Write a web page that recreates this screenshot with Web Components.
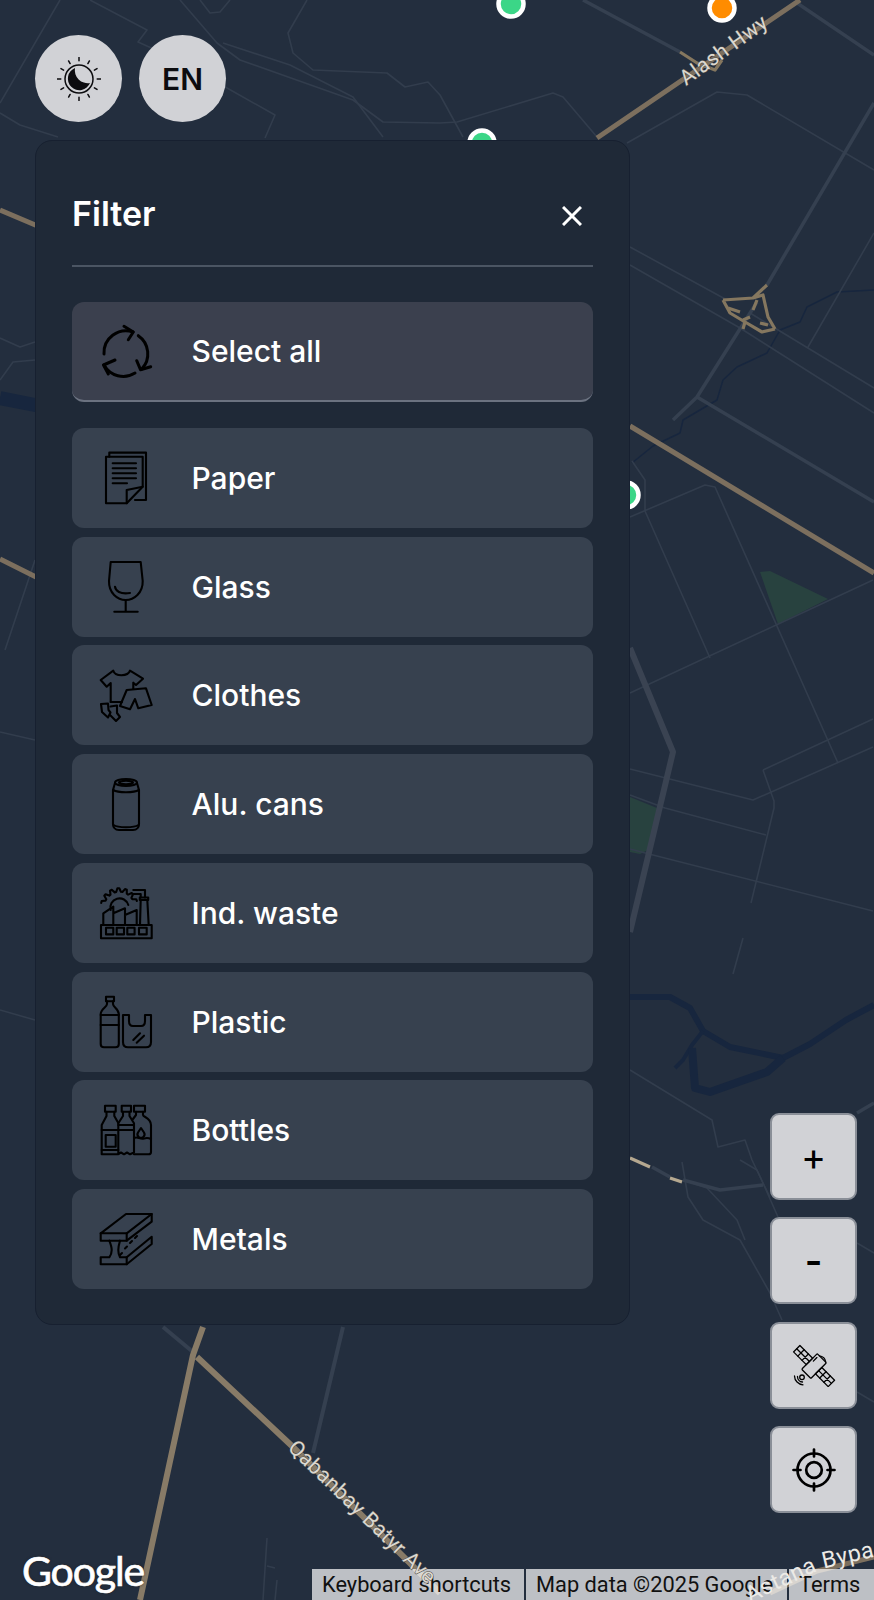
<!DOCTYPE html>
<html lang="en">
<head>
<meta charset="UTF-8">
<title>Filter map</title>
<style>
    html, body { margin: 0; background: #232e3e; }
    body { font-family: Inter, "Liberation Sans", sans-serif; }
</style>
</head>
<body>
<script>
    function gear() {
        const cx = 19.3, cy = 19.7;
        let pts = [];
        for (let i = 0; i < 26; i++) {
            const a = 192 + i * 6;
            const r = i % 4 < 2 ? 18.5 : 15;
            pts.push((cx + r * Math.cos(a * Math.PI / 180)).toFixed(1) + ' ' + (cy + r * Math.sin(a * Math.PI / 180)).toFixed(1));
        }
        return pts.join('L');
    }

    function sunRays() {
        let s = '';
        for (let i = 0; i < 12; i++) {
            const long = i % 3 === 0;
            const t = i * Math.PI / 6;
            const a = long ? 18.2 : 17.8, b = long ? 21.6 : 20.8;
            s += `M${(22 + a * Math.cos(t)).toFixed(2)} ${(22 + a * Math.sin(t)).toFixed(2)}L${(22 + b * Math.cos(t)).toFixed(2)} ${(22 + b * Math.sin(t)).toFixed(2)}`;
        }
        return s;
    }

    const ICONS = {
        all: `<g stroke-width="3"><path d="M4 29A22 22 0 0 1 33 7"/><path d="M24 1.3 33.3 7 28.3 14.7"/><path d="M38.3 10.7A22 22 0 0 1 41.7 44"/><path d="M36.7 35.7 40.5 44.7 50.7 41.7"/><path d="M35 48A22 22 0 0 1 4 40"/><path d="M15 35 3.5 40 8.3 49"/></g>`,
        paper: `<path d="M9.3 4.7V.6H46V48H35"/><path d="M42.7 34.7 26.7 51.3H6V4.7H42.7Z"/><path d="M26.7 51.3V38L42.7 34.7"/><path d="M12.7 11.3H36M12.7 16.3H36M12.7 21.3H36M12.7 26.3H36M12.7 31.3H27"/>`,
        glass: `<path d="M10.7 1H40.7L42.7 20C43 32 34 39 25.7 39S8.7 32 9 20Z"/><path d="M25.7 39V50.7M14.3 50.7H37.7"/><path d="M15 25.7C15.5 30 20 33.5 30 32"/>`,
        clothes: `<path d="M10.7 33V14L6.7 17.7.7 11 13.3 1.7C15 7.7 28 7.7 30 1.7L43 9.7 36 16 33.3 13.7V20"/><path d="M10.7 33H22"/><path d="M26.7 21 46 19.3 51.7 36 38.3 39.3 35 30 30 40.3 20 37Z"/><path d="M1 35 8 34.5 8.5 41 10.5 43.5 8 48.5 2 43Z"/><path d="M10.5 37.5 17 36.5V44L20 48 16 52 10 46"/>`,
        can: `<ellipse cx="26" cy="4.5" rx="11" ry="3.5"/><ellipse cx="26" cy="4.5" rx="7" ry="1.8"/><path d="M15 5 13 12V46C13 49 15 52 19 52H33C37 52 39 49 39 46V12L37 5"/><path d="M13.2 12C18 15 34 15 38.8 12M13.5 47C18 50 34 50 38.5 47"/>`,
        factory: `<rect x="1" y="38" width="50.7" height="13.3"/><path d="M6 40.7h7.3v6.7H6zM16.7 40.7h7.3v6.7h-7.3zM27.3 40.7h7.3v6.7h-7.3zM39 40.7h7.7v6.7H39z"/><path d="M3.3 38V26.3L13.3 19.7V38M13.3 26.3 25 21.3V38M25 28 36.7 23V38"/><path d="M40 38 40.7 13H47.3L48.7 38"/><path d="M39.8 13V10.5H48.2V13"/><path d="M33.3 3H45V10.5M33.3 7H40.7V10.5"/><path d="M${gear()}"/><path d="M10.7 23A9 9 0 0 1 28.3 18"/>`,
        plastic: `<path d="M6 .7H14V5.3H6Z"/><path d="M7 5.3V8C7 11 .7 13 .7 18V48C.7 50 2 51.3 4 51.3H15.5C17.5 51.3 18.8 50 18.8 48V18C18.8 13 13 11 13 8V5.3"/><path d="M.7 19H18.8M.7 29H18.8"/><path d="M23 19H29V25Q29 30 33 30H41Q45 30 45 25V19H51V46Q51 51.3 46 51.3H28Q23 51.3 23 46Z"/><path d="M33.3 44 40 37.3M36.7 46.7 44 39.7"/>`,
        bottles: `<path d="M5 1.7H15.7V7.7H5Z"/><path d="M6.5 7.7V12L1.7 21V50.3H18.3"/><path d="M14.3 7.7V12L18.3 19"/><path d="M5.7 31H15.7V42.7H5.7Z"/><path d="M1.7 26H18.3M1.7 46H18.3"/><path d="M21.7 1.7H31V7.7H21.7Z"/><path d="M23 7.7V12L18.3 19.3V50L21 48.5 24 50.3 27 48.5 30 50.3 34 48.5V19.3L29.5 12V7.7"/><path d="M18.3 21H34M18.3 26H34"/><path d="M34 1.7H45V7.7H34Z"/><path d="M36 7.7V11L33 15M43 7.7V11C43 13 51 14 51 21V48C51 49.5 50 50.3 48.5 50.3H34"/><path d="M34 34C38 32 40 36 44 34.5 47 33.5 49 34 51 35"/><path d="M41 24 44 28.5A3.5 3.5 0 1 1 38 28.5Z"/>`,
        metals: `<path d="M26 1H51.7L26.7 20.3H.7Z"/><path d="M.7 20.3V27.7H26.7L51.7 8.7V1"/><path d="M26.7 20.3V27.7"/><path d="M9.3 27.7C11 32 11.7 34 11.7 37S11 42 9.3 44.3H.7V51.3H26.7L51.7 31V23.7L26.7 44.3H20C18.7 42 18.3 40 18.3 37S18.7 32 20 27.7"/><path d="M26.7 44.3V51.3"/><path d="M20 42 22 40M25 35.5 27 33.5M30 30 32 28M35 25 37 23"/>`
    };

    class MapCanvas extends HTMLElement {
        constructor() {
            super();
            this.attachShadow({mode: 'open'}).innerHTML = `
<style>
    :host { position: absolute; inset: 0; display: block; overflow: hidden; }
    svg { display: block; }
    path { fill: none; stroke-linejoin: round; }
    .thin { stroke: #323d4d; stroke-width: 1.6; }
    .mid { stroke: #354050; stroke-width: 3.5; }
    .thick { stroke: #3a4352; stroke-width: 6; }
    .tan { stroke: #7c6f5e; stroke-width: 5; }
    .ramp { stroke: #85775f; stroke-width: 3.2; }
    .water { stroke: #17263e; }
    .pin { stroke: #fff; stroke-width: 4.5; }
</style>
<svg width="874" height="1600" viewBox="0 0 874 1600">
    <rect width="874" height="1600" fill="#232e3e"/>
    <path style="fill:#28423f" d="M760 572 770 571 828 599 778 624Z"/>
    <path style="fill:#28423f" d="M625 795 657 808 650 849 640 854 625 851Z"/>
    <path class="water" stroke-width="14" d="M0 398 40 406"/>
    <path class="water" stroke-width="6" d="M625 997H670L690 1008 703 1031 730 1047 783 1058 810 1044 846 1020 874 1005"/>
    <path class="water" stroke-width="4" d="M703 1031 692 1045 683 1060 675 1068"/>
    <path class="water" stroke-width="8" d="M692 1048 695 1088 710 1092 767 1072 783 1058"/>
    <path class="water" stroke-width="1.5" d="M874 290 837 292 807 307 800 322 780 330 767 353 737 367 723 380 717 400 683 420 680 433 653 446 632 463"/>
    <path class="thin" d="M60 0 0 103M0 113 20 125 58 137M90 0 147 30 138 42 167 55 227 88 275 115 265 138"/>
    <path class="thin" d="M180 0 217 43 240 60 353 100 383 122 440 123 457 122 553 93 563 97 597 137"/>
    <path class="thin" d="M200 0 210 13 220 12 230 0M307 0 288 33 293 53 313 70 387 73 405 87 428 82 440 95 463 137"/>
    <path class="thin" d="M223 43 290 65 353 97 383 137M627 143 717 92 747 95 874 170"/>
    <path class="thin" d="M630 247 727 300M750 313 874 388M630 265 740 328 874 413M808 347 874 233"/>
    <path class="thin" d="M0 338 20 347 35 342M0 380 13 362 35 360M0 732 35 740M0 1010 35 1020M5 650 35 560"/>
    <path class="thin" d="M630 517 705 485 715 487 838 763M632 461 645 480 645 511 710 658M630 693 873 580"/>
    <path class="thin" d="M630 769 753 800 873 747M763 770 873 719M763 770 774 801V808L751 903"/>
    <path class="thin" d="M630 795 665 808 766 835M630 849 653 855 873 911M743 938 733 974"/>
    <path class="thin" d="M630 1070 712 1120 718 1147 745 1140 752 1160 763 1183 770 1197M682 1162 688 1197 703 1220 740 1240 770 1293 782 1320"/>
    <path class="thin" d="M683 1180 707 1188 737 1220 745 1240M740 1160 757 1170 763 1183 778 1217M857 1243 874 1253M857 1392 874 1402"/>
    <path class="thin" d="M267 1538 263 1600M277 1580 275 1600M267 1566 275 1568"/>
    <path class="mid" stroke-width="2.5" d="M683 1180 720 1190 763 1185M652 1167 670 1177"/>
    <path class="mid" d="M583 0 680 52M797 3 874 55M874 103 767 285M857 1113 874 1103"/>
    <path class="mid" d="M757 302 697 397 673 420M697 397 874 502"/>
    <path class="mid" style="stroke-width:4" d="M163 1327 193 1352M343 1327 313 1453"/>
    <path class="thick" d="M630 648 673 752 630 932"/>
    <path class="tan" d="M597 138 800 0M0 210 40 227M0 559 40 579M630 426 874 573"/>
    <path class="tan" style="stroke-width:6;stroke:#887b67" d="M203 1327 193 1355 140 1600M197 1357 293 1447 440 1593"/>
    <path class="tan" d="M770 1593 817 1571 874 1557"/>
    <path class="ramp" style="stroke:#b5a890" d="M630 1158 650 1167M670 1178 682 1182"/>
    <path class="ramp" d="M680 52 697 63 715 70 722 60"/>
    <path class="ramp" d="M723 300 753 298 767 285M753 298 763 295 768 317 775 329M723 300 730 313 745 322 762 332 775 329"/>
    <path class="ramp" d="M757 300 753 310M728 308 740 312M743 320 750 317M760 323 768 325M745 322 743 329"/>
    <circle class="pin" cx="511" cy="4" r="12.5" fill="#3bd687"/>
    <circle class="pin" cx="722" cy="8" r="12.5" fill="#ff8c00"/>
    <circle class="pin" cx="482" cy="143" r="12.5" fill="#3bd687"/>
    <circle class="pin" cx="626" cy="495" r="12.5" fill="#3bd687"/>
</svg>`;
        }
    }

    class MapLabels extends HTMLElement {
        constructor() {
            super();
            this.attachShadow({mode: 'open'}).innerHTML = `
<style>
    :host { position: absolute; inset: 0; display: block; overflow: hidden; pointer-events: none; }
    svg { display: block; }
    text { font: 21px Roboto, "Liberation Sans", sans-serif; fill: #dcd8d0; paint-order: stroke; stroke: #55524e; stroke-width: 1; letter-spacing: .5px; }
    .bypass { font-size: 23px; fill: #eceae6; stroke: none; }
</style>
<svg width="874" height="1600" viewBox="0 0 874 1600">
    <defs><path id="bypass-line" d="M745 1606 770 1593 817 1571Q825 1568 830 1567L874 1557 930 1545"/></defs>
    <text transform="translate(686 86) rotate(-36)">Alash Hwy</text>
    <text transform="translate(287 1449) rotate(44)">Qabanbay Batyr Ave</text>
    <text class="bypass"><textPath href="#bypass-line" startOffset="6">Astana Bypass</textPath></text>
</svg>`;
        }
    }

    class RoundButton extends HTMLElement {
        constructor() {
            super();
            this.attachShadow({mode: 'open'}).innerHTML = `
<style>
    :host { display: flex; width: 87px; height: 87px; border-radius: 50%; background: #d1d2d6; align-items: center; justify-content: center;
        color: #0c0c0f; font: 600 30px Inter, "Liberation Sans", sans-serif; }
</style>
<slot></slot>`;
        }
    }

    class FilterItem extends HTMLElement {
        constructor() {
            super();
            this.attachShadow({mode: 'open'});
        }

        connectedCallback() {
            this.shadowRoot.innerHTML = `
<style>
    :host { display: flex; align-items: center; height: 100px; box-sizing: border-box; padding-left: 28px; border-radius: 12px; background: #37414f;
        color: #fff; font: 450 30px Inter, "Liberation Sans", sans-serif; }
    :host([selected]) { background: #3b404e; border-bottom: 2px solid #6b7280; }
    svg { width: 52px; height: 52px; flex: none; margin-right: 39.5px; fill: none; stroke: #000; stroke-width: 2.1; stroke-linejoin: round; stroke-linecap: round; overflow: visible; }
</style>
<svg viewBox="0 0 52 52">${ICONS[this.getAttribute('icon')] || ''}</svg>
<slot></slot>`;
        }
    }

    class FilterPanel extends HTMLElement {
        constructor() {
            super();
            this.attachShadow({mode: 'open'}).innerHTML = `
<style>
    :host { display: block; box-sizing: border-box; width: 595px; border: 1px solid #172030; border-radius: 17px; padding: 0 36px 35px; background: #1f2937; color: #fff; }
    header { display: flex; align-items: center; justify-content: space-between; height: 126px; box-sizing: border-box; border-bottom: 2px solid #4b5563; padding: 20px 11px 0 0; }
    h2 { margin: 0; font: 600 34px Inter, "Liberation Sans", sans-serif; }
    svg { width: 20px; height: 20px; stroke: #fff; stroke-width: 3; margin-top: 5px; }
    .all { margin-top: 35px; margin-bottom: 26px; display: block; }
    .list { display: flex; flex-direction: column; gap: 8.72px; }
</style>
<header><h2>Filter</h2><svg viewBox="0 0 20 20"><path d="M1 1 19 19M19 1 1 19"/></svg></header>
<div class="all"><slot name="all"></slot></div>
<div class="list"><slot></slot></div>`;
        }
    }

    class MapButton extends HTMLElement {
        constructor() {
            super();
            this.attachShadow({mode: 'open'}).innerHTML = `
<style>
    :host { display: flex; box-sizing: border-box; width: 87px; height: 87px; align-items: center; justify-content: center; border: 2px solid #8a8f98; border-radius: 9px; background: #d1d2d6;
        color: #000; font: 400 38px Inter, "Liberation Sans", sans-serif; }
    :host([heavy]) { font-weight: 600; }
</style>
<slot></slot>`;
        }
    }

    class MapAttribution extends HTMLElement {
        constructor() {
            super();
            this.attachShadow({mode: 'open'}).innerHTML = `
<style>
    :host { position: absolute; right: 0; bottom: 0; left: 312px; display: flex; height: 31px; gap: 2px; color: #111; font: 21.8px/32px Roboto, "Liberation Sans", sans-serif; white-space: nowrap; }
    span { background: rgba(255,255,255,.7); overflow: hidden; box-sizing: border-box; padding-left: 10px; }
    .kb { width: 212px; }
    .data { width: 261px; }
    .terms { flex: 1; }
</style>
<span class="kb">Keyboard shortcuts</span><span class="data">Map data ©2025 Google</span><span class="terms">Terms</span>`;
        }
    }

    class GoogleMark extends HTMLElement {
        constructor() {
            super();
            this.attachShadow({mode: 'open'}).innerHTML = `
<style>
    :host { position: absolute; left: 22px; bottom: 5px; color: #fff; font: 400 41px Lato, "Liberation Sans", sans-serif; letter-spacing: -1.1px; -webkit-text-stroke: .7px #fff; text-shadow: 0 0 3px #222; }
</style>
Google`;
        }
    }

    class AppShell extends HTMLElement {
        constructor() {
            super();
            this.attachShadow({mode: 'open'}).innerHTML = `
<style>
    :host { position: relative; display: block; width: 874px; height: 1600px; overflow: hidden; }
    .overlay { position: relative; display: flex; flex-direction: column; gap: 18px; padding: 35px 0 0 35px; width: max-content; }
    .top { display: flex; gap: 17px; }
    .controls { position: absolute; right: 17px; bottom: 87px; display: flex; flex-direction: column; gap: 17.5px; }
</style>
<slot name="map"></slot>
<div class="overlay">
    <div class="top"><slot name="top"></slot></div>
    <slot name="panel"></slot>
</div>
<div class="controls"><slot name="controls"></slot></div>
<slot name="footer"></slot>`;
        }
    }

    customElements.define('map-canvas', MapCanvas);
    customElements.define('map-labels', MapLabels);
    customElements.define('round-button', RoundButton);
    customElements.define('filter-item', FilterItem);
    customElements.define('filter-panel', FilterPanel);
    customElements.define('map-button', MapButton);
    customElements.define('map-attribution', MapAttribution);
    customElements.define('google-mark', GoogleMark);
    customElements.define('app-shell', AppShell);
</script>
<app-shell>
    <map-canvas slot="map"></map-canvas>
    <round-button slot="top">
        <svg width="44" height="44" viewBox="0 0 44 44" fill="none" stroke="#0c0c0f" stroke-width="1.5" stroke-linecap="round">
            <path id="rays"/>
            <circle cx="22" cy="22" r="14"/>
            <path fill="#0c0c0f" stroke="none" d="M18 11A11.5 11.5 0 1 0 33 26A13 13 0 0 1 18 11Z"/>
        </svg>
    </round-button>
    <round-button slot="top">EN</round-button>
    <filter-panel slot="panel">
        <filter-item slot="all" icon="all" selected>Select all</filter-item>
        <filter-item icon="paper">Paper</filter-item>
        <filter-item icon="glass">Glass</filter-item>
        <filter-item icon="clothes">Clothes</filter-item>
        <filter-item icon="can">Alu. cans</filter-item>
        <filter-item icon="factory">Ind. waste</filter-item>
        <filter-item icon="plastic">Plastic</filter-item>
        <filter-item icon="bottles">Bottles</filter-item>
        <filter-item icon="metals">Metals</filter-item>
    </filter-panel>
    <map-button slot="controls">+</map-button>
    <map-button slot="controls" heavy>-</map-button>
    <map-button slot="controls">
        <svg width="44" height="44" viewBox="0 0 44 44" fill="none" stroke="#000" stroke-width="1.3" stroke-linejoin="round" stroke-linecap="round">
            <g transform="translate(21.7 22.7) rotate(45)">
                <rect x="-6" y="-11" width="13" height="22" rx="1"/>
                <path d="M-3.5 -8V-3"/>
                <rect x="-24" y="-4.5" width="18" height="9"/>
                <path d="M-24 0H-6M-18 -4.5V4.5M-12 -4.5V4.5"/>
                <rect x="7" y="-4.5" width="18" height="9"/>
                <path d="M7 0H25M13 -4.5V4.5M19 -4.5V4.5"/>
                <path d="M-3 -11A7 7 0 0 1 6 -11"/>
            </g>
            <circle cx="10" cy="34.3" r="2.3"/>
            <path d="M5.5 33.5A5.5 5.5 0 0 0 10.5 39M2.5 33A9 9 0 0 0 11 41.8"/>
        </svg>
    </map-button>
    <map-button slot="controls">
        <svg width="44" height="44" viewBox="0 0 44 44" fill="none" stroke="#000" stroke-width="2.7" stroke-linecap="round">
            <circle cx="22" cy="22" r="16.5"/>
            <circle cx="22" cy="22" r="7.8"/>
            <path d="M22 1.5V8.5M22 35.5V42.5M1.5 22H8.5M35.5 22H42.5"/>
        </svg>
    </map-button>
    <google-mark slot="footer"></google-mark>
    <map-attribution slot="footer"></map-attribution>
    <map-labels slot="footer"></map-labels>
</app-shell>
<script>
    document.getElementById('rays').setAttribute('d', sunRays());
</script>
</body>
</html>
